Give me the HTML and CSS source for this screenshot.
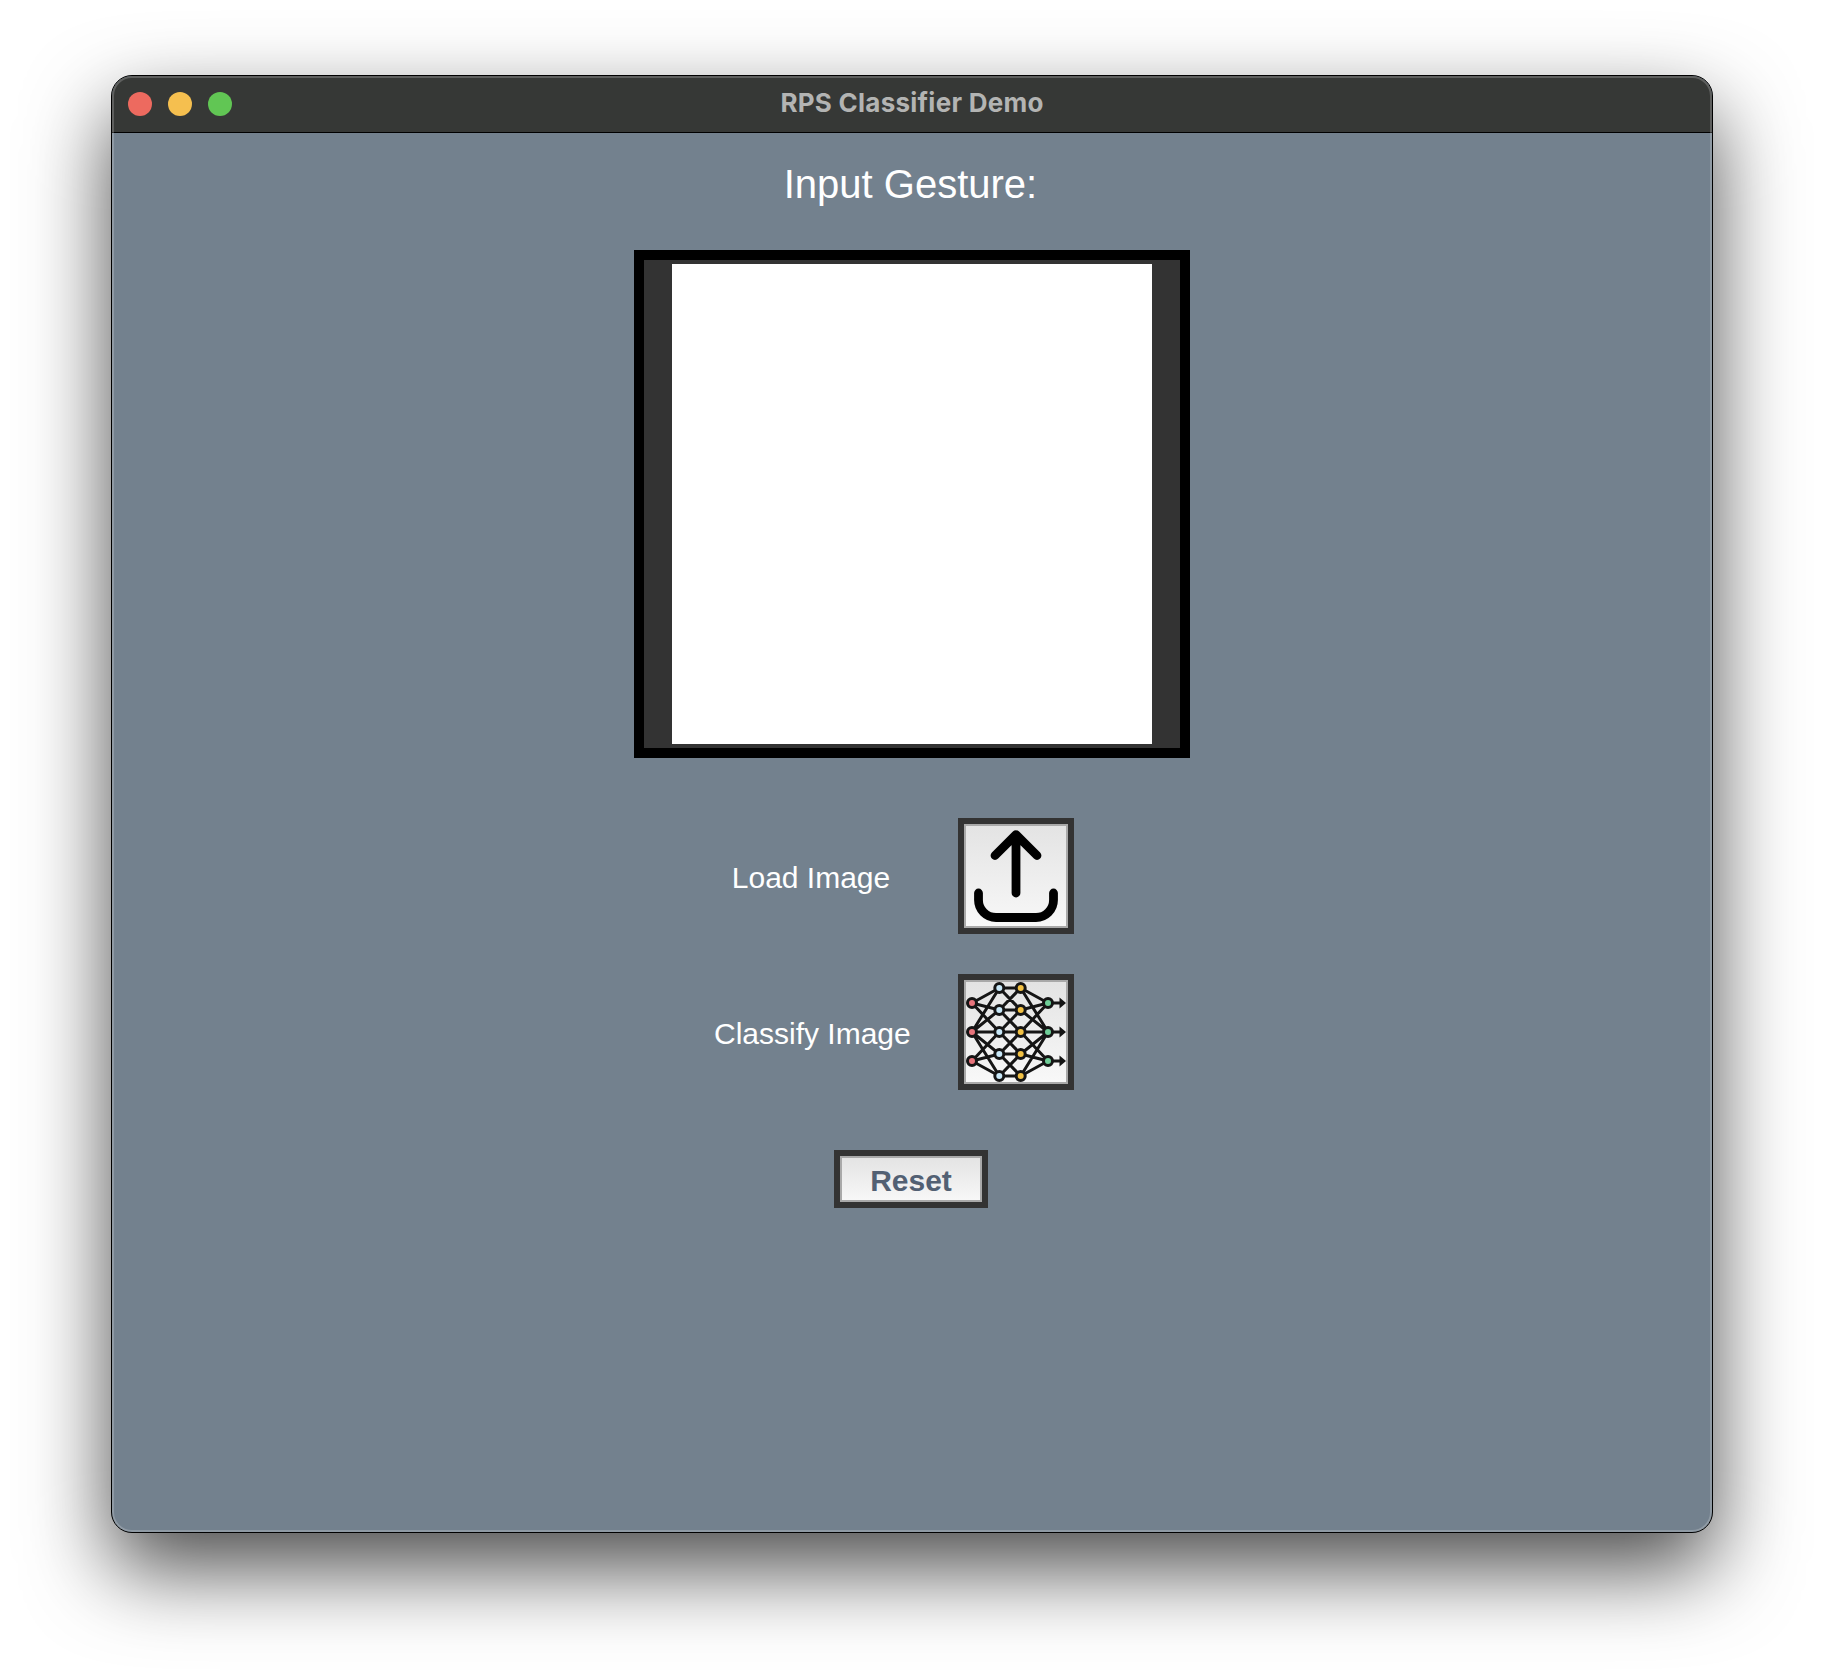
FILE: index.html
```html
<!DOCTYPE html>
<html lang="en">
<head>
<meta charset="utf-8">
<title>RPS Classifier Demo</title>
<link rel="stylesheet" href="styles.css">
</head>
<body>
<div class="window">
  <header class="titlebar">
    <div class="lights"><span class="light close"></span><span class="light minimize"></span><span class="light maximize"></span></div>
    <h1 class="title">RPS Classifier Demo</h1>
  </header>
  <main class="content">
    <h2 class="heading">Input Gesture:</h2>
    <div class="frame"><div class="preview"></div></div>
    <div class="actions">
      <span class="label load">Load Image</span>
      <button class="button icon-button" aria-label="Load Image">
        <svg viewBox="0 0 100 100" fill="none" stroke="#000" stroke-width="8.8" stroke-linecap="round" stroke-linejoin="round">
          <path d="M50 67V8.6M29 29.5L50 8.6L71 29.5M12.5 67V74A17.5 17.5 0 0 0 30 91.5H70A17.5 17.5 0 0 0 87.5 74V67"/>
        </svg>
      </button>
      <span class="label">Classify Image</span>
      <button class="button icon-button" aria-label="Classify Image">
        <svg viewBox="0 0 100 100" stroke="#151515" stroke-width="3">
          <path fill="none" d="M6 21L33.3 6M6 21L33.3 28M6 21L33.3 50M6 50L33.3 6M6 50L33.3 28M6 50H33.3M6 50L33.3 72M6 50L33.3 94M6 79L33.3 50M6 79L33.3 72M6 79L33.3 94"/>
          <path fill="none" d="M33.3 6H54.7M33.3 28H54.7M33.3 50H54.7M33.3 72H54.7M33.3 94H54.7M33.3 6L54.7 28M33.3 28L54.7 6M33.3 28L54.7 50M33.3 50L54.7 28M33.3 50L54.7 72M33.3 72L54.7 50M33.3 72L54.7 94M33.3 94L54.7 72"/>
          <path fill="none" d="M82 21L54.7 6M82 21L54.7 28M82 21L54.7 50M82 50L54.7 6M82 50L54.7 28M82 50H54.7M82 50L54.7 72M82 50L54.7 94M82 79L54.7 50M82 79L54.7 72M82 79L54.7 94"/>
          <path fill="none" d="M82 21H96M82 50H96M82 79H96"/>
          <path fill="#151515" stroke="none" d="M93.5 15.5L100 21L93.5 26.5ZM93.5 44.5L100 50L93.5 55.5ZM93.5 73.5L100 79L93.5 84.5Z"/>
          <g fill="#e8747c"><circle cx="6" cy="21" r="4.5"/><circle cx="6" cy="50" r="4.5"/><circle cx="6" cy="79" r="4.5"/></g>
          <g fill="#c9e8f8"><circle cx="33.3" cy="6" r="4.5"/><circle cx="33.3" cy="28" r="4.5"/><circle cx="33.3" cy="50" r="4.5"/><circle cx="33.3" cy="72" r="4.5"/><circle cx="33.3" cy="94" r="4.5"/></g>
          <g fill="#f2c144"><circle cx="54.7" cy="6" r="4.5"/><circle cx="54.7" cy="28" r="4.5"/><circle cx="54.7" cy="50" r="4.5"/><circle cx="54.7" cy="72" r="4.5"/><circle cx="54.7" cy="94" r="4.5"/></g>
          <g fill="#6fce98"><circle cx="82" cy="21" r="4.5"/><circle cx="82" cy="50" r="4.5"/><circle cx="82" cy="79" r="4.5"/></g>
        </svg>
      </button>
    </div>
    <button class="button reset">Reset</button>
  </main>
</div>
</body>
</html>
```
FILE: styles.css
```css
* { box-sizing: border-box; }
body {
  margin: 0;
  height: 1680px;
  padding: 75px 111px 0;
  background: #fff;
  overflow: hidden;
  font-family: "Liberation Sans", Arial, sans-serif;
}
.window {
  position: relative;
  width: 1602px;
  height: 1458px;
  border: 1px solid #000;
  border-radius: 21px;
  overflow: hidden;
  background: #73818e;
  box-shadow: 0 36px 84px rgba(0, 0, 0, .7);
}
/* light rim just inside the window edge */
.window::after {
  content: "";
  position: absolute;
  inset: 0;
  border: 2px solid rgba(255, 255, 255, .2);
  border-radius: 20px;
  pointer-events: none;
}
.titlebar {
  display: grid;
  grid-template-columns: 1fr auto 1fr;
  align-items: center;
  height: 57px;
  padding: 0 16px;
  background: #363836;
  border-bottom: 1px solid #000;
}
.lights { display: flex; gap: 16px; }
.light { width: 24px; height: 24px; border-radius: 50%; }
.close { background: #ed6a5f; }
.minimize { background: #f5bf4f; }
.maximize { background: #61c654; }
.title {
  margin: 0;
  font: 700 26px/32px Inter, sans-serif;
  letter-spacing: .25px;
  color: #b3b4b3;
  padding-bottom: 2px;
}
.content {
  display: flex;
  flex-direction: column;
  align-items: center;
}
.heading {
  margin: 28px 0 43px;
  font-size: 40px;
  font-weight: 400;
  line-height: 46px;
  color: #fff;
  padding-right: 3px;
}
.frame {
  display: flex;
  align-items: center;
  justify-content: center;
  width: 556px;
  height: 508px;
  border: 10px solid #000;
  background: #333;
}
.preview { width: 480px; height: 480px; background: #fff; }
.actions {
  display: grid;
  grid-template-columns: 196px 116px;
  gap: 40px 48px;
  align-items: center;
  margin: 60px 36px 60px 0;
}
.label {
  font-size: 30px;
  line-height: 34px;
  text-align: center;
  white-space: nowrap;
  color: #fff;
  padding-top: 3px;
}
.load { padding-right: 2px; }
.button {
  padding: 0;
  border: 6px solid #333;
  background: linear-gradient(#e3e3e3, #f8f8f8);
  box-shadow: inset 0 0 0 2px #a9a9a9;
}
.icon-button {
  display: flex;
  align-items: center;
  justify-content: center;
  width: 116px;
  height: 116px;
}
.icon-button svg { width: 100px; height: 100px; }
.reset {
  width: 154px;
  height: 58px;
  margin-right: 2px;
  font: 700 30px/34px "Liberation Sans", Arial, sans-serif;
  color: #526073;
  padding-top: 4px;
}
```
